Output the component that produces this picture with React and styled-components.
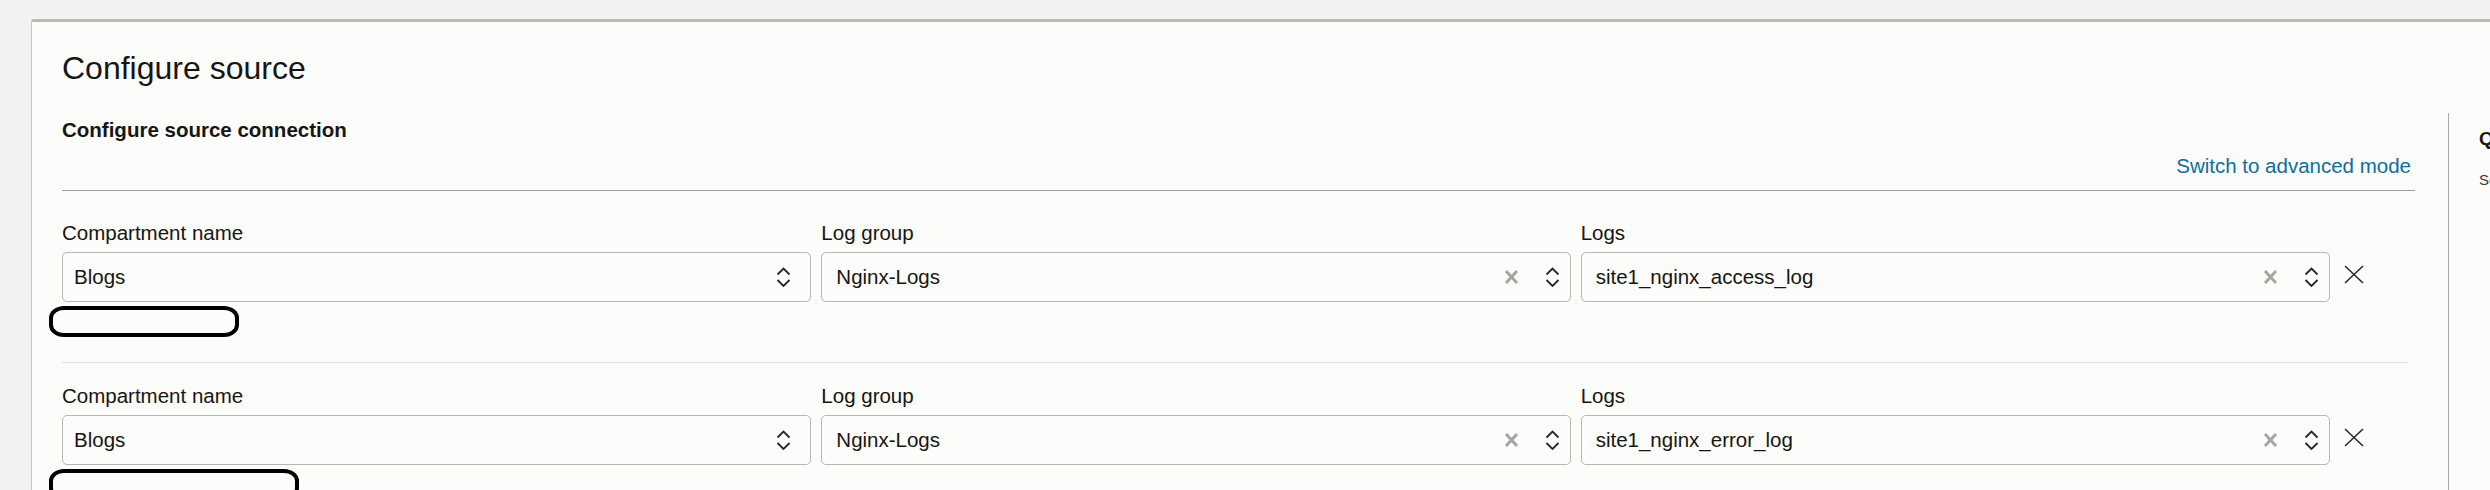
import React from 'react';
import styled, { createGlobalStyle } from 'styled-components';

const GlobalStyle = createGlobalStyle`
  html, body {
    margin: 0;
    padding: 0;
    background: #f3f2f1;
    overflow: hidden;
  }
  body {
    font-family: "Liberation Sans", Arial, sans-serif;
    color: #161513;
  }
`;

const Page = styled.div`
  height: 490px;
  overflow: hidden;
  padding: 19px 0 0 31px;
  box-sizing: border-box;
`;

const Card = styled.section`
  width: 2800px;
  min-height: 600px;
  box-sizing: border-box;
  background: #fcfcfb;
  border-top: 3px solid #bdb8b1;
  border-left: 1px solid #c9c6c2;
  border-top-left-radius: 3px;
  padding: 26px 0 0 30px;
`;

const Title = styled.h1`
  margin: 0 0 25px;
  font-size: 32px;
  line-height: 40px;
  font-weight: 400;
`;

const Body = styled.div`
  display: flex;
  align-items: stretch;
`;

const Main = styled.div`
  flex: 0 0 2353px;
`;

const Subtitle = styled.h2`
  margin: 5px 0 0;
  font-size: 20.5px;
  line-height: 24px;
  font-weight: 700;
`;

const LinkRow = styled.div`
  display: flex;
  justify-content: flex-end;
  margin-top: 12px;
  padding-right: 4px;
`;

const ModeLink = styled.a`
  color: #0f6d9e;
  font-size: 20.5px;
  line-height: 24px;
  text-decoration: none;
  cursor: pointer;
`;

const HeaderRule = styled.div`
  margin-top: 12px;
  border-top: 1px solid #9e9e9e;
`;

const SourceList = styled.div`
  padding-top: 9px;
`;

const SourceRow = styled.div`
  display: grid;
  grid-template-columns: 1fr 1fr 1fr 75px;
  column-gap: 10px;
  padding: 21px 0 25px;
`;

const Separator = styled.div`
  height: 1px;
  margin-right: 6px;
  background: #e4e2df;
`;

const Field = styled.div`
  display: flex;
  flex-direction: column;
  min-width: 0;
`;

const Label = styled.label`
  font-size: 20.5px;
  line-height: 24px;
  margin-bottom: 7px;
`;

const SelectBox = styled.div`
  height: 50px;
  box-sizing: border-box;
  display: flex;
  align-items: center;
  padding: 0 ${p => p.$end}px 0 ${p => p.$inset}px;
  border: 1px solid #bab6b0;
  border-radius: 5px;
  background: #fcfcfb;
`;

const Value = styled.span`
  flex: 1;
  font-size: 20.5px;
  line-height: 24px;
  white-space: nowrap;
  overflow: hidden;
`;

const ClearButton = styled.span`
  display: flex;
  margin-right: 26px;
`;

const Redaction = styled.div`
  width: ${p => p.$w}px;
  height: 31px;
  box-sizing: border-box;
  margin: 4px 0 0 -13px;
  border: 4px solid #000;
  border-radius: 15px / 12px;
`;

const RemoveCell = styled.div`
  display: flex;
  align-items: center;
  height: 50px;
  margin: 28px 0 0 4px;
`;

const Aside = styled.aside`
  margin-left: 33px;
  border-left: 1px solid #a8a8a8;
  padding: 14px 0 0 30px;
  white-space: nowrap;
`;

const AsideTitle = styled.h3`
  margin: 0;
  font-size: 19px;
  line-height: 24px;
  font-weight: 700;
`;

const AsideText = styled.p`
  margin: 19px 0 0;
  font-size: 15px;
  line-height: 20px;
  color: #3a3937;
`;

const UpDown = () => (
  <svg width="15" height="20" viewBox="0 0 15 20" fill="none" stroke="#262626" strokeWidth="1.8">
    <polyline points="1.5,7.5 7.5,1.5 13.5,7.5" />
    <polyline points="1.5,13 7.5,19 13.5,13" />
  </svg>
);

const ClearX = () => (
  <svg width="15" height="16" viewBox="0 0 15 16" stroke="#a8a5a1" strokeWidth="3">
    <line x1="2" y1="2" x2="13" y2="14" />
    <line x1="13" y1="2" x2="2" y2="14" />
  </svg>
);

const RemoveX = () => (
  <svg width="20" height="19" viewBox="0 0 20 19" stroke="#262626" strokeWidth="1.5">
    <line x1="1" y1="1" x2="19" y2="18" />
    <line x1="19" y1="1" x2="1" y2="18" />
  </svg>
);

const sources = [
  { compartment: 'Blogs', group: 'Nginx-Logs', log: 'site1_nginx_access_log', mark: 190 },
  { compartment: 'Blogs', group: 'Nginx-Logs', log: 'site1_nginx_error_log', mark: 250 },
];

const Select = ({ label, value, clearable, inset, end, children }) => (
  <Field>
    <Label>{label}</Label>
    <SelectBox $inset={inset} $end={end}>
      <Value>{value}</Value>
      {clearable && <ClearButton><ClearX /></ClearButton>}
      <UpDown />
    </SelectBox>
    {children}
  </Field>
);

export default function App() {
  return (
    <>
      <GlobalStyle />
      <Page>
        <Card>
          <Title>Configure source</Title>
          <Body>
            <Main>
              <Subtitle>Configure source connection</Subtitle>
              <LinkRow>
                <ModeLink>Switch to advanced mode</ModeLink>
              </LinkRow>
              <HeaderRule />
              <SourceList>
                {sources.map((s, i) => (
                  <React.Fragment key={i}>
                    {i > 0 && <Separator />}
                    <SourceRow>
                      <Select label="Compartment name" value={s.compartment} inset={11} end={19}>
                        <Redaction $w={s.mark} />
                      </Select>
                      <Select label="Log group" value={s.group} clearable inset={14} end={10} />
                      <Select label="Logs" value={s.log} clearable inset={14} end={10} />
                      <RemoveCell><RemoveX /></RemoveCell>
                    </SourceRow>
                  </React.Fragment>
                ))}
              </SourceList>
            </Main>
            <Aside>
              <AsideTitle>Quick start</AsideTitle>
              <AsideText>Select the logs to move with this connector.</AsideText>
            </Aside>
          </Body>
        </Card>
      </Page>
    </>
  );
}
